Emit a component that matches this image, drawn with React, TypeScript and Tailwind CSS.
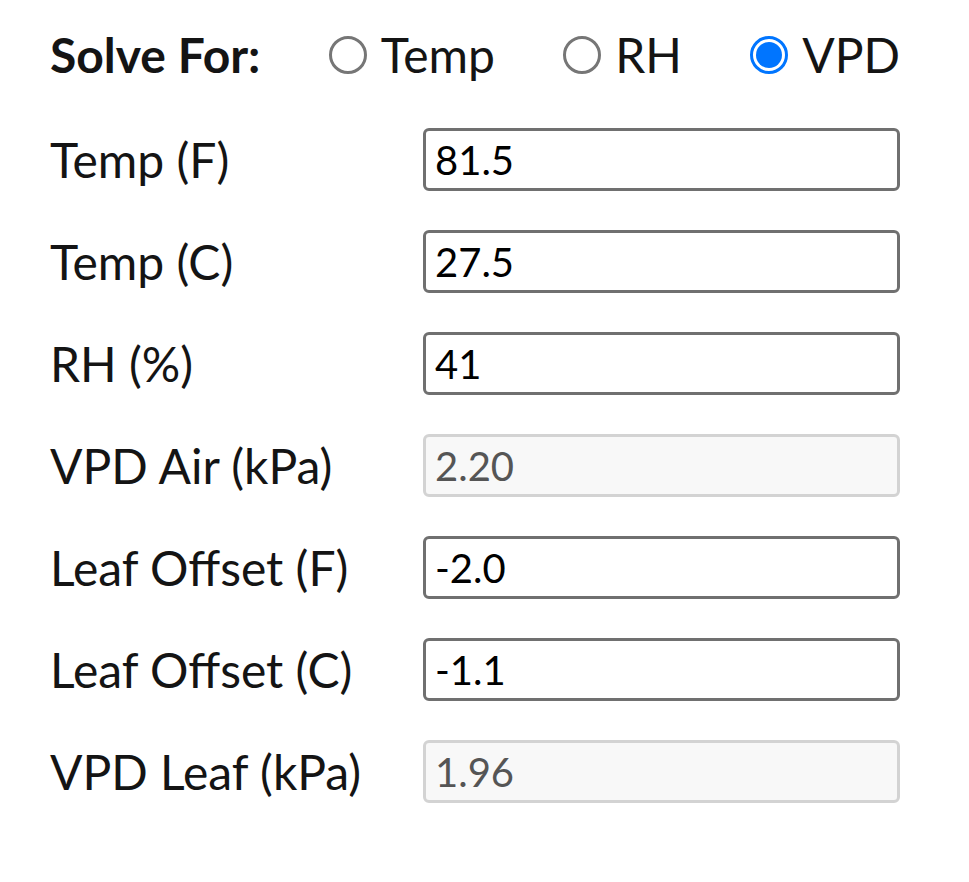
import React, { useState } from 'react';

const rows = [
    { label: 'Temp (F)', value: '81.5' },
    { label: 'Temp (C)', value: '27.5' },
    { label: 'RH (%)', value: '41' },
    { label: 'VPD Air (kPa)', value: '2.20', disabled: true },
    { label: 'Leaf Offset (F)', value: '-2.0' },
    { label: 'Leaf Offset (C)', value: '-1.1' },
    { label: 'VPD Leaf (kPa)', value: '1.96', disabled: true },
];

const Radio = ({ label, checked, onClick }: { label: string; checked: boolean; onClick: () => void }) => (
    <button type="button" onClick={onClick} className="flex items-center gap-[14px] cursor-pointer">
        {checked ? (
            <span className="w-[38px] h-[38px] rounded-full border-[3px] border-[#0075ff] flex items-center justify-center">
                <span className="w-[26px] h-[26px] rounded-full bg-[#0075ff]" />
            </span>
        ) : (
            <span className="w-[38px] h-[38px] rounded-full border-[3px] border-[#767676] bg-white" />
        )}
        <span className="text-[48px] leading-none">{label}</span>
    </button>
);

const App = () => {
    const [solve, setSolve] = useState('VPD');

    return (
        <div className="w-[969px] min-h-[882px] bg-white text-[#141414] pl-[50px] pt-[23px]" style={{ fontFamily: 'Lato, "Noto Sans", sans-serif' }}>
            <div className="w-[850px] flex flex-col gap-[39px]">
                {/* header row sits a touch higher than the field rows */}
                <div className="h-[63px] mb-[3px] flex items-center justify-between">
                    <span className="text-[48px] font-bold leading-none">Solve For:</span>
                    {['Temp', 'RH', 'VPD'].map((s) => (
                        <Radio key={s} label={s} checked={solve === s} onClick={() => setSolve(s)} />
                    ))}
                </div>

                {rows.map((r) => (
                    <div key={r.label} className="flex items-center h-[63px]">
                        <label className="w-[373px] shrink-0 text-[48px] leading-none">{r.label}</label>
                        <input
                            defaultValue={r.value}
                            disabled={r.disabled}
                            className={
                                r.disabled
                                    ? 'w-[477px] h-[63px] rounded-[6px] border-[3px] border-[#d3d3d3] bg-[#f8f8f8] text-[#555] px-[9px] text-[40px] outline-none'
                                    : 'w-[477px] h-[63px] rounded-[6px] border-[3px] border-[#707070] bg-white text-black px-[9px] text-[40px] outline-none'
                            }
                        />
                    </div>
                ))}
            </div>
        </div>
    );
};

export default App;
